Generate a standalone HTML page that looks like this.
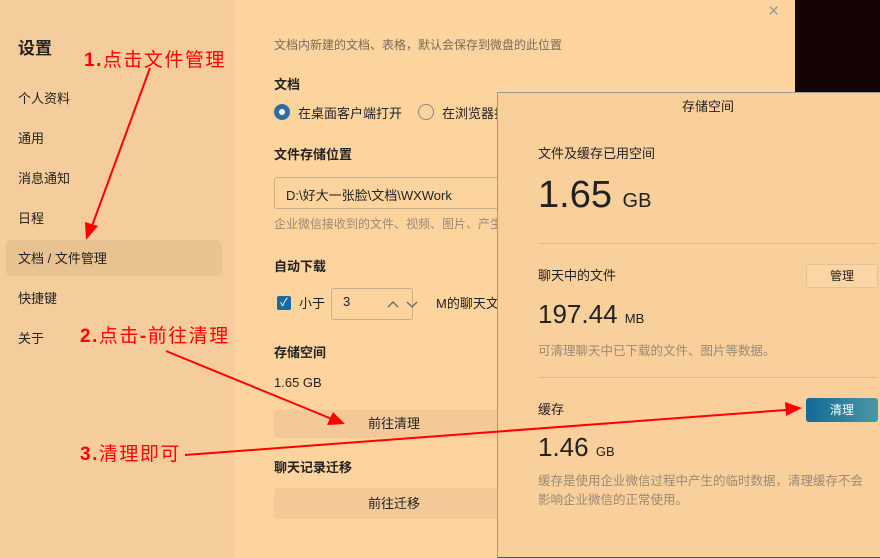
<!DOCTYPE html>
<html><head><meta charset="utf-8"><style>
*{margin:0;padding:0;box-sizing:border-box}
body{width:880px;height:558px;overflow:hidden;position:relative;background:#fdd49e;font-family:"Liberation Sans","Noto Sans CJK SC",sans-serif;color:#222}
.a{position:absolute;white-space:nowrap}
.side{position:absolute;left:0;top:0;width:234px;height:558px;background:#f5cd9c}
.nav{position:absolute;left:18px;font-size:13px;color:#222}
.b{font-weight:bold;font-size:13px}
.g{color:#9a8a74;font-size:12px}
.btn{position:absolute;background:#f3c998;border-radius:4px;font-size:13px;text-align:center}
.red{color:#f00;font-size:19px;position:absolute;white-space:nowrap;letter-spacing:1.5px}
.red b{font-family:"Liberation Sans",sans-serif}
.dlg{position:absolute;left:497px;top:92px;width:383px;height:466px;background:#f9cf9b;border-left:1px solid #9a9a9a;border-top:1px solid #9a9a9a;border-bottom:1px solid #555}
</style></head><body>
<div class="side"></div>
<div class="a" style="left:18px;top:34px;font-size:17px;font-weight:bold">设置</div>
<div class="nav" style="top:88px">个人资料</div>
<div class="nav" style="top:128px">通用</div>
<div class="nav" style="top:168px">消息通知</div>
<div class="nav" style="top:208px">日程</div>
<div style="position:absolute;left:6px;top:240px;width:216px;height:36px;background:#e8c290;border-radius:5px"></div>
<div class="nav" style="top:248px">文档 / 文件管理</div>
<div class="nav" style="top:288px">快捷键</div>
<div class="nav" style="top:328px">关于</div>

<div style="position:absolute;left:795px;top:0;width:85px;height:92px;background:#150404"></div>
<div style="position:absolute;left:780px;top:0;width:15px;height:15px;background:#fdd49e;border-top-right-radius:12px"></div>
<div class="a" style="left:768px;top:1px;font-size:19px;color:#999">×</div>

<div class="a g" style="left:274px;top:36px;color:#7a6b58">文档内新建的文档、表格，默认会保存到微盘的此位置</div>
<div class="a b" style="left:274px;top:74px">文档</div>
<div style="position:absolute;left:274px;top:104px;width:16px;height:16px;border-radius:50%;background:#2d6da0"></div>
<div style="position:absolute;left:279px;top:109px;width:6px;height:6px;border-radius:50%;background:#fff"></div>
<div class="a" style="left:298px;top:103px;font-size:13px">在桌面客户端打开</div>
<div style="position:absolute;left:418px;top:104px;width:16px;height:16px;border-radius:50%;border:1px solid #888"></div>
<div class="a" style="left:442px;top:103px;font-size:13px">在浏览器打开</div>
<div class="a b" style="left:274px;top:144px">文件存储位置</div>
<div style="position:absolute;left:274px;top:177px;width:240px;height:32px;border:1px solid #c9ad88;border-radius:3px"></div>
<div class="a" style="left:286px;top:185px;font-size:13px">D:\好大一张脸\文档\WXWork</div>
<div class="a g" style="left:274px;top:215px">企业微信接收到的文件、视频、图片、产生</div>
<div class="a b" style="left:274px;top:256px">自动下载</div>
<div style="position:absolute;left:277px;top:296px;width:14px;height:14px;background:#1a6aa0;border-radius:2px;color:#fff;font-size:11px;line-height:14px;text-align:center">✓</div>
<div class="a" style="left:299px;top:293px;font-size:13px">小于</div>
<div style="position:absolute;left:331px;top:288px;width:82px;height:32px;border:1px solid #c9ad88;border-radius:3px"></div>
<div class="a" style="left:343px;top:294px;font-size:13px">3</div>
<svg class="a" style="left:386px;top:298px" width="34" height="12"><path d="M2 9 L7 4 L12 9 M21 4 L26 9 L31 4" stroke="#666" fill="none" stroke-width="1.3"/></svg>
<div class="a" style="left:436px;top:293px;font-size:13px">M的聊天文件</div>
<div class="a b" style="left:274px;top:342px">存储空间</div>
<div class="a" style="left:274px;top:375px;font-size:13px">1.65 GB</div>
<div class="btn" style="left:274px;top:410px;width:240px;height:28px;line-height:28px">前往清理</div>
<div class="a b" style="left:274px;top:457px">聊天记录迁移</div>
<div class="btn" style="left:274px;top:488px;width:240px;height:31px;line-height:31px">前往迁移</div>

<div class="dlg"></div>
<div class="a" style="left:682px;top:96px;font-size:13px">存储空间</div>
<div class="a" style="left:538px;top:143px;font-size:13px">文件及缓存已用空间</div>
<div class="a" style="left:538px;top:172px;font-size:38px;line-height:46px">1.65 <span style="font-size:20px">GB</span></div>
<div style="position:absolute;left:538px;top:243px;width:340px;height:1px;background:#e1b98a"></div>
<div class="a" style="left:538px;top:265px;font-size:13px">聊天中的文件</div>
<div style="position:absolute;left:806px;top:264px;width:72px;height:24px;border:1px solid #e3c197;background:#fbd6a4;border-radius:3px;font-size:12px;text-align:center;line-height:22px">管理</div>
<div class="a" style="left:538px;top:298px;font-size:26px;line-height:32px">197.44 <span style="font-size:13px">MB</span></div>
<div class="a g" style="left:538px;top:340px;font-size:12.5px">可清理聊天中已下载的文件、图片等数据。</div>
<div style="position:absolute;left:538px;top:377px;width:340px;height:1px;background:#e1b98a"></div>
<div class="a" style="left:538px;top:399px;font-size:13px">缓存</div>
<div style="position:absolute;left:806px;top:398px;width:72px;height:24px;background:linear-gradient(90deg,#146a98,#4a97a4);border-radius:3px;color:#fff;font-size:12px;text-align:center;line-height:24px">清理</div>
<div class="a" style="left:538px;top:431px;font-size:26px;line-height:32px">1.46 <span style="font-size:13px">GB</span></div>
<div class="a g" style="left:538px;top:472px;font-size:12.5px;line-height:19px">缓存是使用企业微信过程中产生的临时数据，清理缓存不会<br>影响企业微信的正常使用。</div>

<div class="red" style="left:84px;top:45px"><b>1.</b>点击文件管理</div>
<div class="red" style="left:80px;top:321px"><b>2.</b>点击<b>-</b>前往清理</div>
<div class="red" style="left:80px;top:439px"><b>3.</b>清理即可</div>
<svg class="a" style="left:0;top:0" width="880" height="558">
<g stroke="#f00" stroke-width="2" fill="#f00">
<line x1="150" y1="68" x2="92" y2="226"/>
<polygon points="86,240 85,222 98,226" stroke="none"/>
<line x1="166" y1="351" x2="332" y2="419"/>
<polygon points="345,424 327,425 333,412" stroke="none"/>
<line x1="185" y1="455" x2="786" y2="410"/>
<polygon points="802,408 785,402 786,416" stroke="none"/>
</g></svg>
</body></html>
